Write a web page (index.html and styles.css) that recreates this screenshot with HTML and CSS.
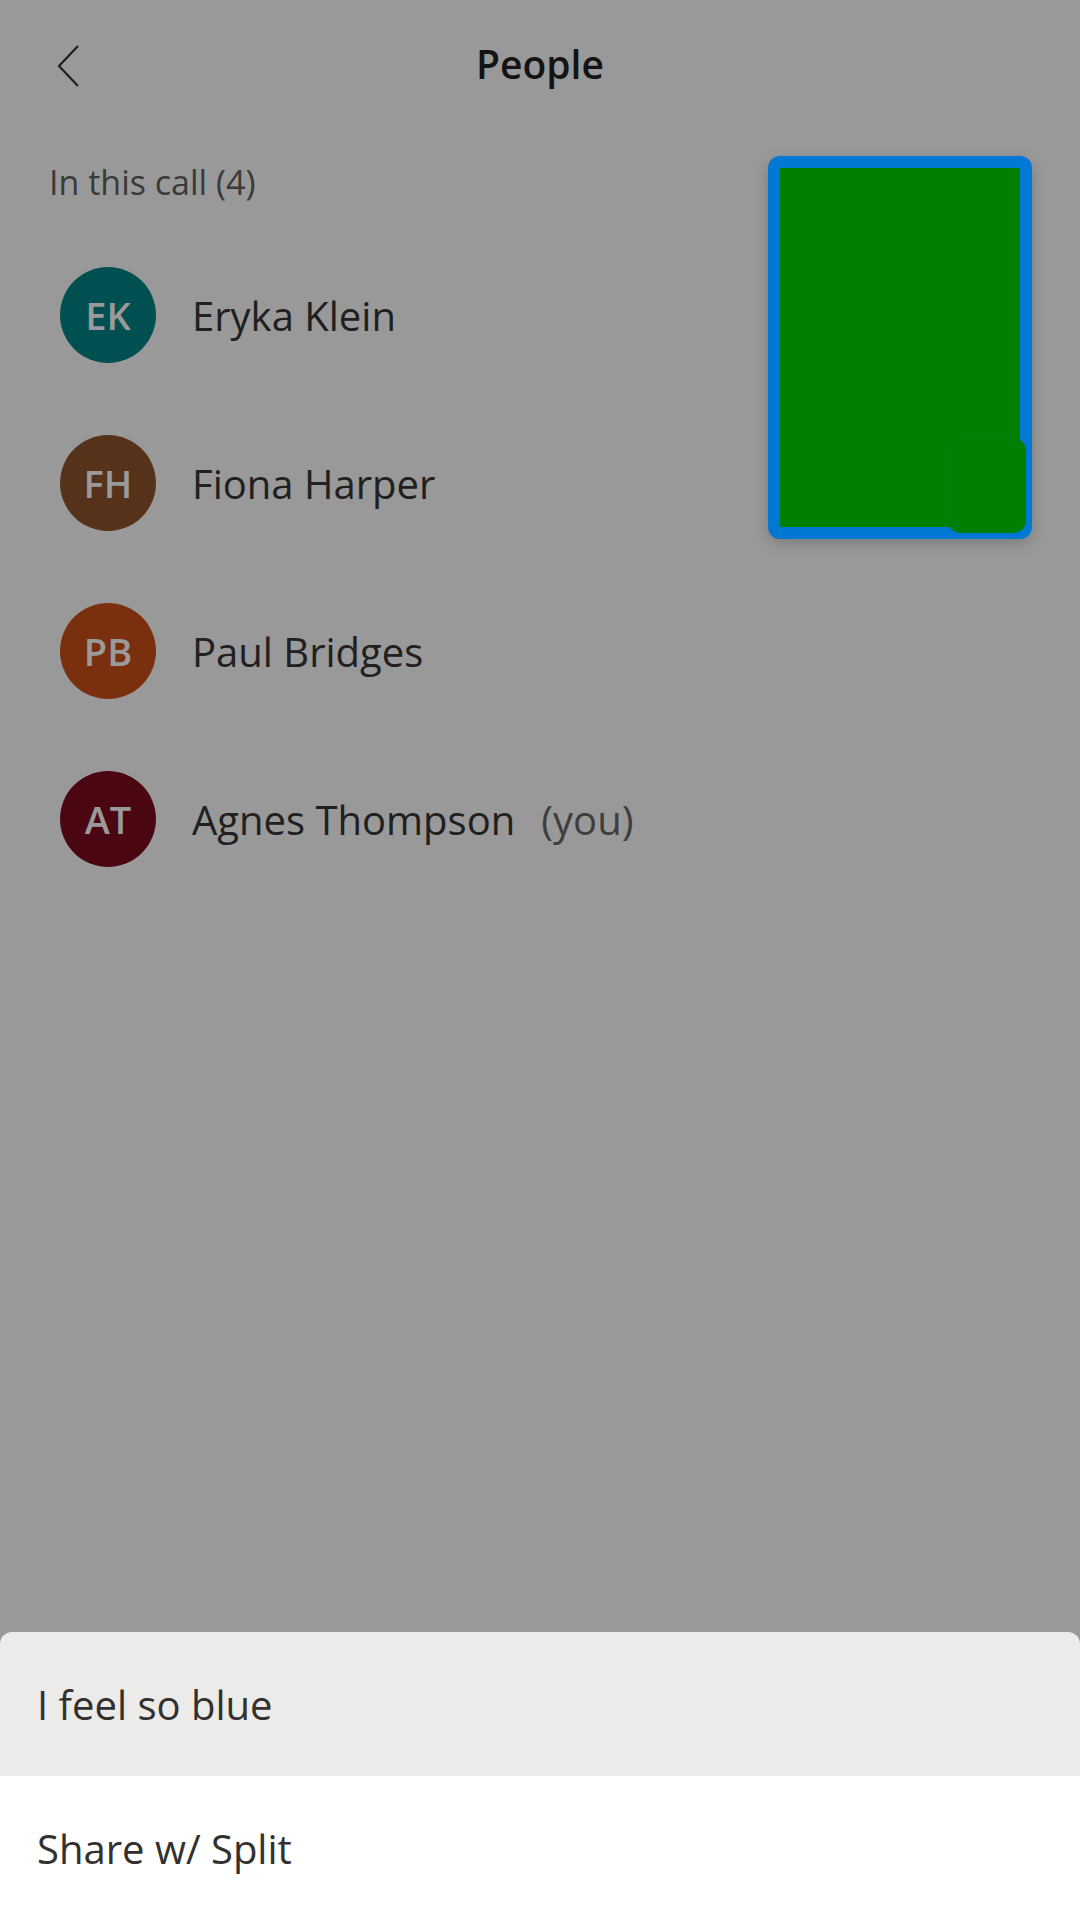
FILE: index.html
```html
<!DOCTYPE html>
<html>
<head>
<meta charset="utf-8">
<link rel="stylesheet" href="styles.css">
</head>
<body>
<div class="screen">
  <header class="header">
    <svg class="back" width="24" height="42" viewBox="0 0 24 42"><path d="M22 1 L3 21 L22 41" fill="none" stroke="#1f1f1f" stroke-width="2.2"/></svg>
    <h1 class="title">People</h1>
  </header>
  <div class="section">In this call (4)</div>
  <ul class="list">
    <li class="row"><span class="avatar ek">EK</span><span class="name">Eryka Klein</span></li>
    <li class="row"><span class="avatar fh">FH</span><span class="name">Fiona Harper</span></li>
    <li class="row"><span class="avatar pb">PB</span><span class="name">Paul Bridges</span></li>
    <li class="row"><span class="avatar at">AT</span><span class="name">Agnes Thompson</span><span class="you">(you)</span></li>
  </ul>
  <div class="tile"><div class="mini"></div></div>
  <div class="sheet">
    <div class="item active">I feel so blue</div>
    <div class="item">Share w/ Split</div>
  </div>
</div>
</body>
</html>
```
FILE: styles.css
```css
html, body { margin: 0; padding: 0; }
body { background: #999999; font-family: "Open Sans", "Noto Sans", sans-serif; }
.screen { position: relative; width: 1080px; height: 1920px; display: flex; flex-direction: column; overflow: hidden; }
.header { height: 126px; position: relative; display: flex; align-items: center; justify-content: center; }
.back { position: absolute; left: 56px; top: 45px; }
.title { margin: 0; font-size: 39px; font-weight: 600; color: #141414; }
.section { height: 105px; box-sizing: border-box; padding: 33px 0 0 49px; font-size: 34px; color: #3a3a3a; }
.list { list-style: none; margin: 0; padding: 0; }
.row { height: 168px; display: flex; align-items: center; padding-left: 60px; }
.avatar { width: 96px; height: 96px; border-radius: 50%; display: flex; align-items: center; justify-content: center; font-size: 38px; font-weight: 600; color: #9a9a9a; margin-right: 36px; }
.ek { background: #005052; }
.fh { background: #553219; }
.pb { background: #7a2f0e; }
.at { background: #4a0611; }
.name { font-size: 40px; color: #202020; }
.you { font-size: 40px; color: #3e3e3e; margin-left: 26px; }
.tile { position: absolute; left: 768px; top: 156px; width: 240px; height: 359px; border: 12px solid #0078d4; border-radius: 12px; background: #008000; box-shadow: 0 4px 14px rgba(0,0,0,0.2); }
.mini { position: absolute; right: -6px; bottom: -6px; width: 78px; height: 95px; border-radius: 12px; background: #007f00; border: 1px solid #0a7a14; box-sizing: border-box; }
.sheet { margin-top: auto; border-radius: 12px 12px 0 0; overflow: hidden; }
.item { height: 144px; display: flex; align-items: center; padding-left: 37px; background: #ffffff; font-size: 40px; color: #323130; }
.item.active { background: #edebe9; }
```
